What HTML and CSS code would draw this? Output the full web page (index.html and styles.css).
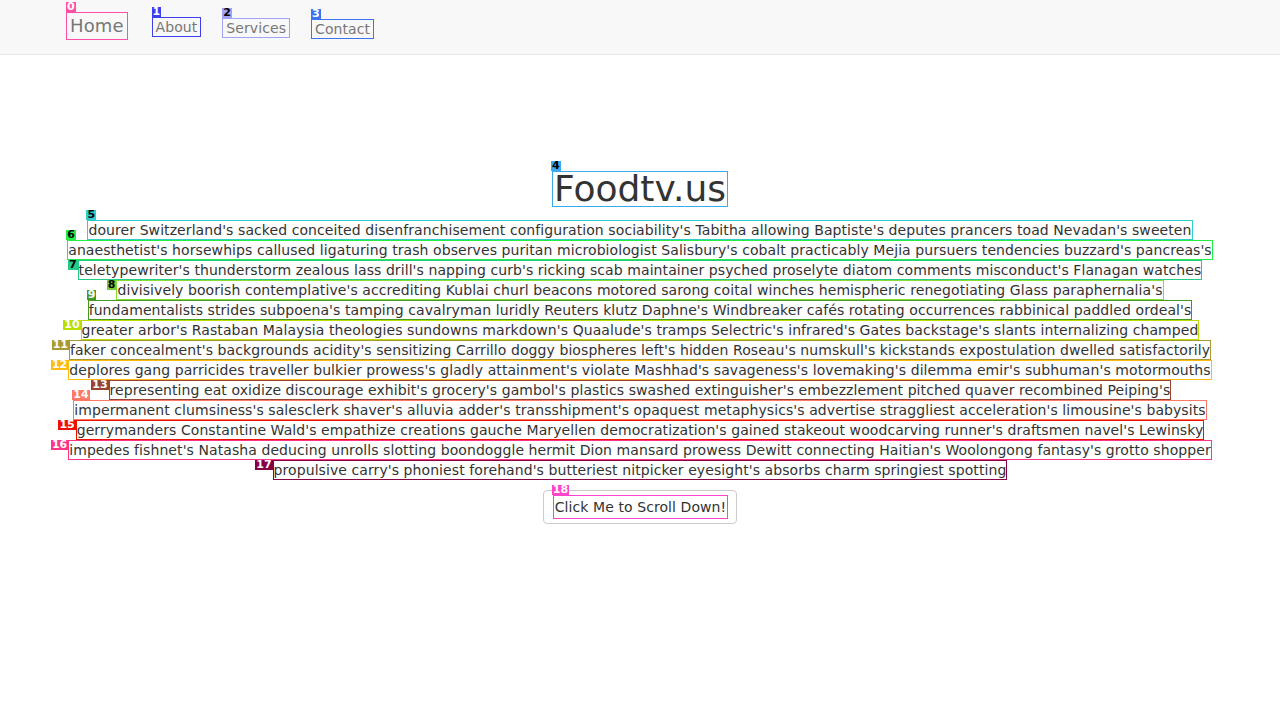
FILE: index.html
```html
<!DOCTYPE html>
<html>
<head>
<meta charset="utf-8">
<title>Foodtv.us</title>
<link rel="stylesheet" href="styles.css">
</head>
<body>
<nav class="navbar">
  <a class="nav-link brand c0"><b class="tag tag-top">0</b>Home</a>
  <a class="nav-link c1 about"><b class="tag tag-top">1</b>About</a>
  <a class="nav-link c2 services"><b class="tag tag-top dark">2</b>Services</a>
  <a class="nav-link c3 contact"><b class="tag tag-top">3</b>Contact</a>
</nav>
<main class="main">
  <h1 class="title"><span class="box c4"><b class="tag tag-top dark">4</b>Foodtv.us</span></h1>
  <div class="lines">
    <span class="line box c5"><b class="tag tag-top dark">5</b>dourer Switzerland's sacked conceited disenfranchisement configuration sociability's Tabitha allowing Baptiste's deputes prancers toad Nevadan's sweeten</span>
    <span class="line box c6"><b class="tag tag-top dark">6</b>anaesthetist's horsewhips callused ligaturing trash observes puritan microbiologist Salisbury's cobalt practicably Mejia pursuers tendencies buzzard's pancreas's</span>
    <span class="line box c7"><b class="tag tag-left dark">7</b>teletypewriter's thunderstorm zealous lass drill's napping curb's ricking scab maintainer psyched proselyte diatom comments misconduct's Flanagan watches</span>
    <span class="line box c8"><b class="tag tag-left dark">8</b>divisively boorish contemplative's accrediting Kublai churl beacons motored sarong coital winches hemispheric renegotiating Glass paraphernalia's</span>
    <span class="line box c9"><b class="tag tag-top">9</b>fundamentalists strides subpoena's tamping cavalryman luridly Reuters klutz Daphne's Windbreaker cafés rotating occurrences rabbinical paddled ordeal's</span>
    <span class="line box c10"><b class="tag tag-left">10</b>greater arbor's Rastaban Malaysia theologies sundowns markdown's Quaalude's tramps Selectric's infrared's Gates backstage's slants internalizing champed</span>
    <span class="line box c11"><b class="tag tag-left">11</b>faker concealment's backgrounds acidity's sensitizing Carrillo doggy biospheres left's hidden Roseau's numskull's kickstands expostulation dwelled satisfactorily</span>
    <span class="line box c12"><b class="tag tag-left">12</b>deplores gang parricides traveller bulkier prowess's gladly attainment's violate Mashhad's savageness's lovemaking's dilemma emir's subhuman's motormouths</span>
    <span class="line box c13"><b class="tag tag-left">13</b>representing eat oxidize discourage exhibit's grocery's gambol's plastics swashed extinguisher's embezzlement pitched quaver recombined Peiping's</span>
    <span class="line box c14"><b class="tag tag-top">14</b>impermanent clumsiness's salesclerk shaver's alluvia adder's transshipment's opaquest metaphysics's advertise straggliest acceleration's limousine's babysits</span>
    <span class="line box c15"><b class="tag tag-left">15</b>gerrymanders Constantine Wald's empathize creations gauche Maryellen democratization's gained stakeout woodcarving runner's draftsmen navel's Lewinsky</span>
    <span class="line box c16"><b class="tag tag-left">16</b>impedes fishnet's Natasha deducing unrolls slotting boondoggle hermit Dion mansard prowess Dewitt connecting Haitian's Woolongong fantasy's grotto shopper</span>
    <span class="line box c17"><b class="tag tag-left">17</b>propulsive carry's phoniest forehand's butteriest nitpicker eyesight's absorbs charm springiest spotting</span>
  </div>
  <div class="actions">
    <button class="btn" type="button"><span class="box c18"><b class="tag tag-top">18</b>Click Me to Scroll Down!</span></button>
  </div>
</main>
</body>
</html>
```
FILE: styles.css
```css
* { box-sizing: border-box; }
html, body { margin: 0; padding: 0; background: #fff; }
body {
  font-family: "DejaVu Sans", "Liberation Sans", sans-serif;
  font-size: 14px;
  color: #333;
  letter-spacing: 0.08px;
}

.navbar {
  height: 55px;
  background: #f8f8f8;
  border-bottom: 1px solid #e7e7e7;
  display: flex;
  align-items: center;
  padding-left: 66px;
}
.nav-link {
  position: relative;
  color: #777;
  text-decoration: none;
  font-size: 14px;
  line-height: 18px;
  padding: 0 3px;
  border: 1px solid currentColor;
  letter-spacing: 0.08px;
}
.nav-link.brand {
  font-size: 18px;
  line-height: 26px;
  padding: 0 3px;
  margin-top: -2px;
  letter-spacing: 0.1px;
}
.nav-link.about { margin-left: 24px; padding: 0 3px; }
.nav-link.services { margin-left: 21px; margin-top: 2px; padding: 0 3px; }
.nav-link.contact { margin-left: 21px; margin-top: 3px; padding: 0 3px; }

.box {
  position: relative;
  outline: 1px solid;
  outline-offset: -1px;
}

.tag {
  position: absolute;
  font-size: 11px;
  font-weight: bold;
  line-height: 10px;
  height: 10px;
  padding: 0 1px;
  color: #fff;
  white-space: nowrap;
  letter-spacing: 0;
}
.tag.dark { color: #000; }
.tag-top { bottom: 100%; left: -1px; }
.nav-link .tag-top { bottom: calc(100% + 1px); left: -1px; }
.tag-left { right: 100%; top: 0; }

.main {
  display: flex;
  flex-direction: column;
  align-items: center;
  padding-top: 116px;
}
.title {
  margin: 0 0 13px;
  font-size: 36px;
  font-weight: 500;
  line-height: 36px;
  letter-spacing: 0;
}
.title .box { display: inline-block; padding: 0 2px; line-height: 36px; }

.lines {
  display: flex;
  flex-direction: column;
  align-items: center;
}
.line {
  display: block;
  line-height: 20px;
  padding: 0 1px;
  white-space: nowrap;
}

.actions { margin-top: 10px; }
.btn {
  font: inherit;
  letter-spacing: 0.08px;
  color: #333;
  background: #fff;
  border: 1px solid #ccc;
  border-radius: 4px;
  padding: 4px 8px 4px 9px;
  line-height: 20px;
}
.btn .box { display: inline-block; padding: 0 2px; line-height: 24px; }

.c0.nav-link { border-color: #ff4fa7; }
.c0 .tag { background: #ff4fa7; }
.c1.nav-link { border-color: #3d3df2; }
.c1 .tag { background: #3d3df2; }
.c2.nav-link { border-color: #a3a3f5; }
.c2 .tag { background: #a3a3f5; }
.c3.nav-link { border-color: #3a74f2; }
.c3 .tag { background: #3a74f2; }
.c4 { outline-color: #3aaaf0; }
.c4 .tag { background: #3aaaf0; }
.c5 { outline-color: #33cccc; }
.c5 .tag { background: #33cccc; }
.c6 { outline-color: #22ee44; }
.c6 .tag { background: #22ee44; }
.c7 { outline-color: #22cc88; }
.c7 .tag { background: #22cc88; }
.c8 { outline-color: #88dd33; }
.c8 .tag { background: #77cc33; }
.c9 { outline-color: #449922; }
.c9 .tag { background: #449922; }
.c10 { outline-color: #bbdd00; }
.c10 .tag { background: #bbdd00; }
.c11 { outline-color: #aa9933; }
.c11 .tag { background: #aa9933; }
.c12 { outline-color: #ffbb11; }
.c12 .tag { background: #ffbb11; }
.c13 { outline-color: #994433; }
.c13 .tag { background: #994433; }
.c14 { outline-color: #ff7766; }
.c14 .tag { background: #ff7766; }
.c15 { outline-color: #ee1100; }
.c15 .tag { background: #ee1100; }
.c16 { outline-color: #ff3388; }
.c16 .tag { background: #ff3388; }
.c17 { outline-color: #880044; }
.c17 .tag { background: #880044; }
.c18 { outline-color: #ff44cc; }
.c18 .tag { background: #ff44cc; }
```
